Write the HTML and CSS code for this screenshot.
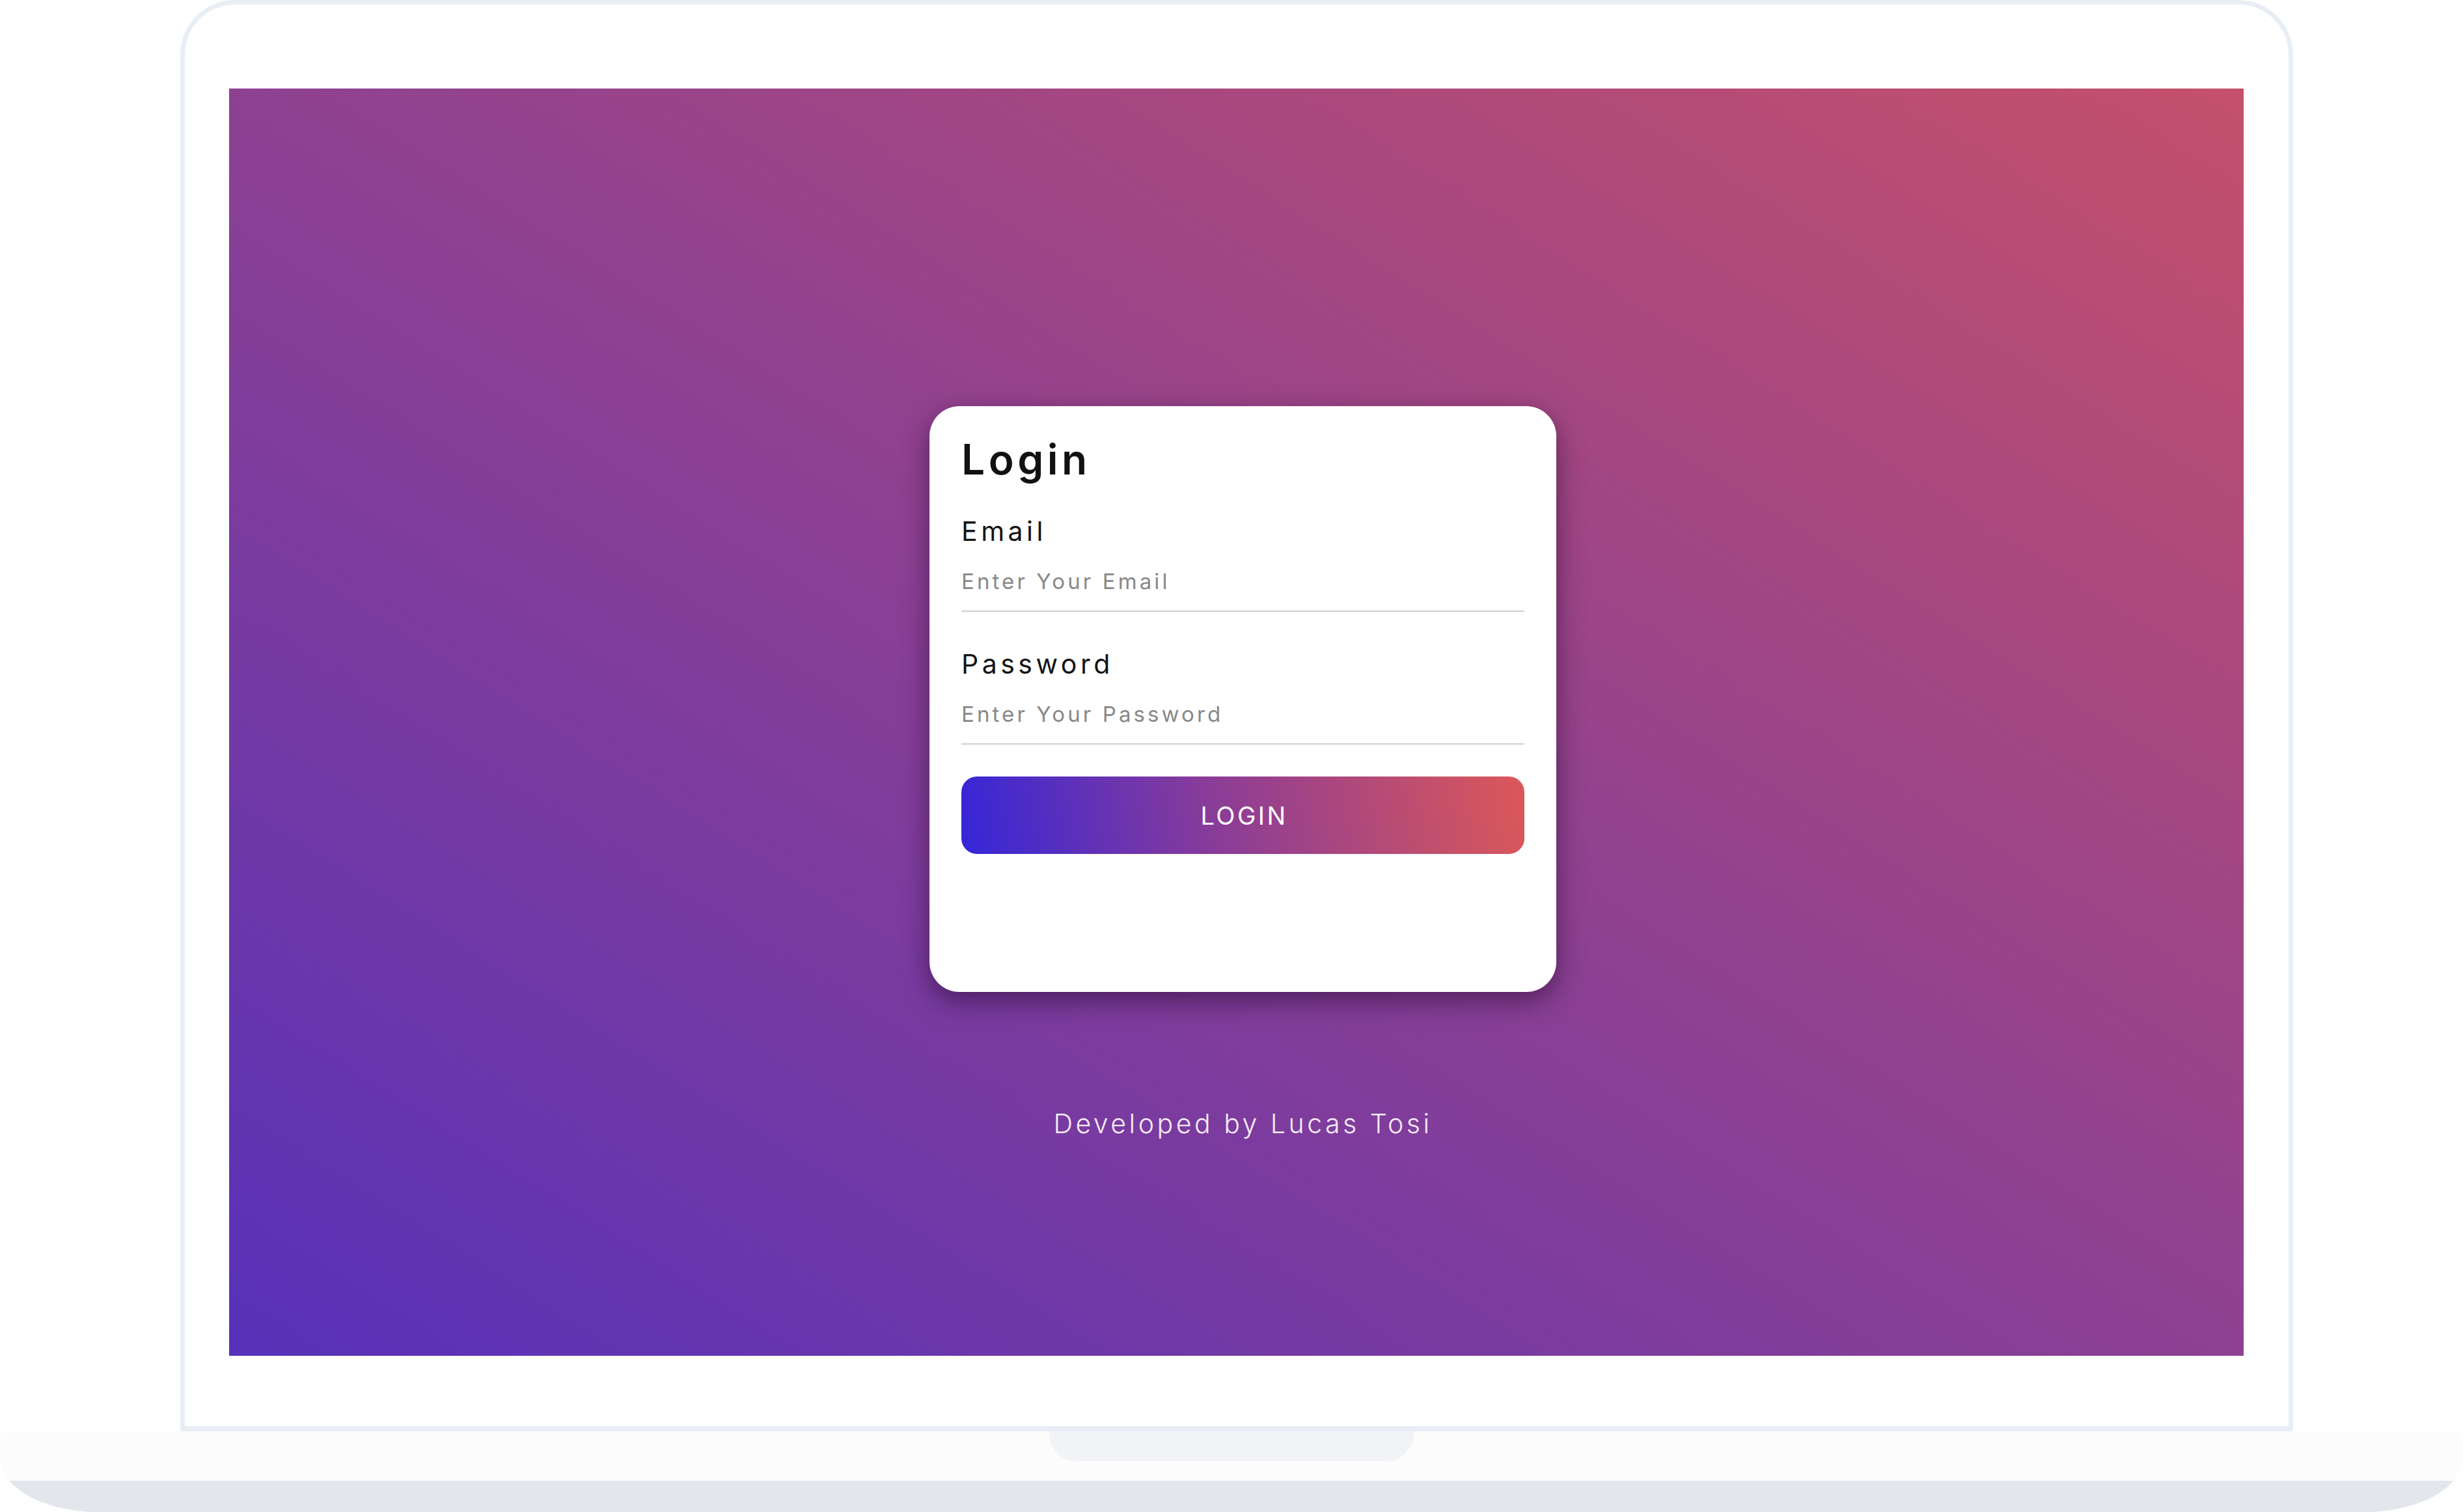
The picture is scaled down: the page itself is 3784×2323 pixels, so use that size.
FILE: index.html
```html
<!DOCTYPE html>
<html lang="en">
<head>
<meta charset="utf-8">
<title>Login</title>
<link rel="stylesheet" href="styles.css">
</head>
<body>
<div class="laptop">
  <div class="lid">
    <div class="screen">
      <form class="card">
        <h1 class="title">Login</h1>
        <label class="label" for="email">Email</label>
        <input class="field" id="email" type="email" placeholder="Enter Your Email">
        <label class="label label-pw" for="password">Password</label>
        <input class="field" id="password" type="password" placeholder="Enter Your Password">
        <button class="btn" type="button">LOGIN</button>
      </form>
      <p class="credit">Developed by Lucas Tosi</p>
    </div>
  </div>
  <div class="base"><div class="notch"></div></div>
</div>
</body>
</html>
```

FILE: styles.css
```css
html, body {
  margin: 0;
  padding: 0;
}

body {
  width: 3784px;
  height: 2323px;
  overflow: hidden;
  background: #ffffff;
  font-family: Inter, "Noto Sans", "Open Sans", sans-serif;
}

.laptop {
  display: flex;
  flex-direction: column;
}

.lid {
  box-sizing: border-box;
  width: 3246px;
  height: 2199px;
  margin-left: 277px;
  border: 7px solid #e9eef5;
  border-bottom-width: 8px;
  border-radius: 84px 84px 0 0;
  padding: 129px 69px 108px 68px;
  background: #ffffff;
}

.screen {
  box-sizing: border-box;
  width: 100%;
  height: 100%;
  display: flex;
  flex-direction: column;
  align-items: center;
  padding: 488px 0 0 20px;
  background: linear-gradient(to top right, #5731b9, #c4506b);
}

.card {
  box-sizing: border-box;
  width: 963px;
  height: 900px;
  background: #ffffff;
  border-radius: 46px;
  padding: 50px 49px 0;
  display: flex;
  flex-direction: column;
  box-shadow: 0 14px 40px rgba(25, 0, 35, 0.5);
}

.title {
  margin: 0 0 58px;
  font-size: 64px;
  line-height: 1;
  font-weight: 600;
  color: #111111;
  letter-spacing: 5.5px;
}

.label {
  font-size: 41px;
  line-height: 1;
  font-weight: 400;
  color: #141414;
  letter-spacing: 5.5px;
}

.label-pw {
  margin-top: 60px;
}

.field {
  box-sizing: border-box;
  width: 100%;
  height: 64px;
  margin-top: 39px;
  padding: 0 0 29px;
  border: none;
  border-bottom: 2px solid #cfcfcf;
  outline: none;
  background: transparent;
  font-family: inherit;
  font-size: 33px;
  line-height: 33px;
  letter-spacing: 4.1px;
  color: #333333;
}

.field::placeholder {
  color: #888888;
  opacity: 1;
  letter-spacing: 4.1px;
}

.btn {
  margin-top: 49px;
  height: 119px;
  padding: 0 0 0 4px;
  border: none;
  border-radius: 24px;
  background: linear-gradient(80deg, #3526d8 0%, #8a3c98 45%, #dc5858 100%);
  color: #ffffff;
  font-family: inherit;
  font-size: 38px;
  font-weight: 400;
  letter-spacing: 3.5px;
}

.credit {
  margin: 182px 0 0;
  font-size: 41px;
  line-height: 1;
  font-weight: 300;
  color: #f4ecf6;
  letter-spacing: 4.5px;
}

.base {
  height: 124px;
  background: linear-gradient(#fcfcfc 0 76px, #e3e6eb 76px);
  border-radius: 10px 10px 150px 150px / 10px 10px 84px 84px;
  display: flex;
  justify-content: center;
}

.notch {
  width: 562px;
  height: 46px;
  background: #f1f3f6;
  border-radius: 0 0 42px 42px / 0 0 46px 46px;
}
```
